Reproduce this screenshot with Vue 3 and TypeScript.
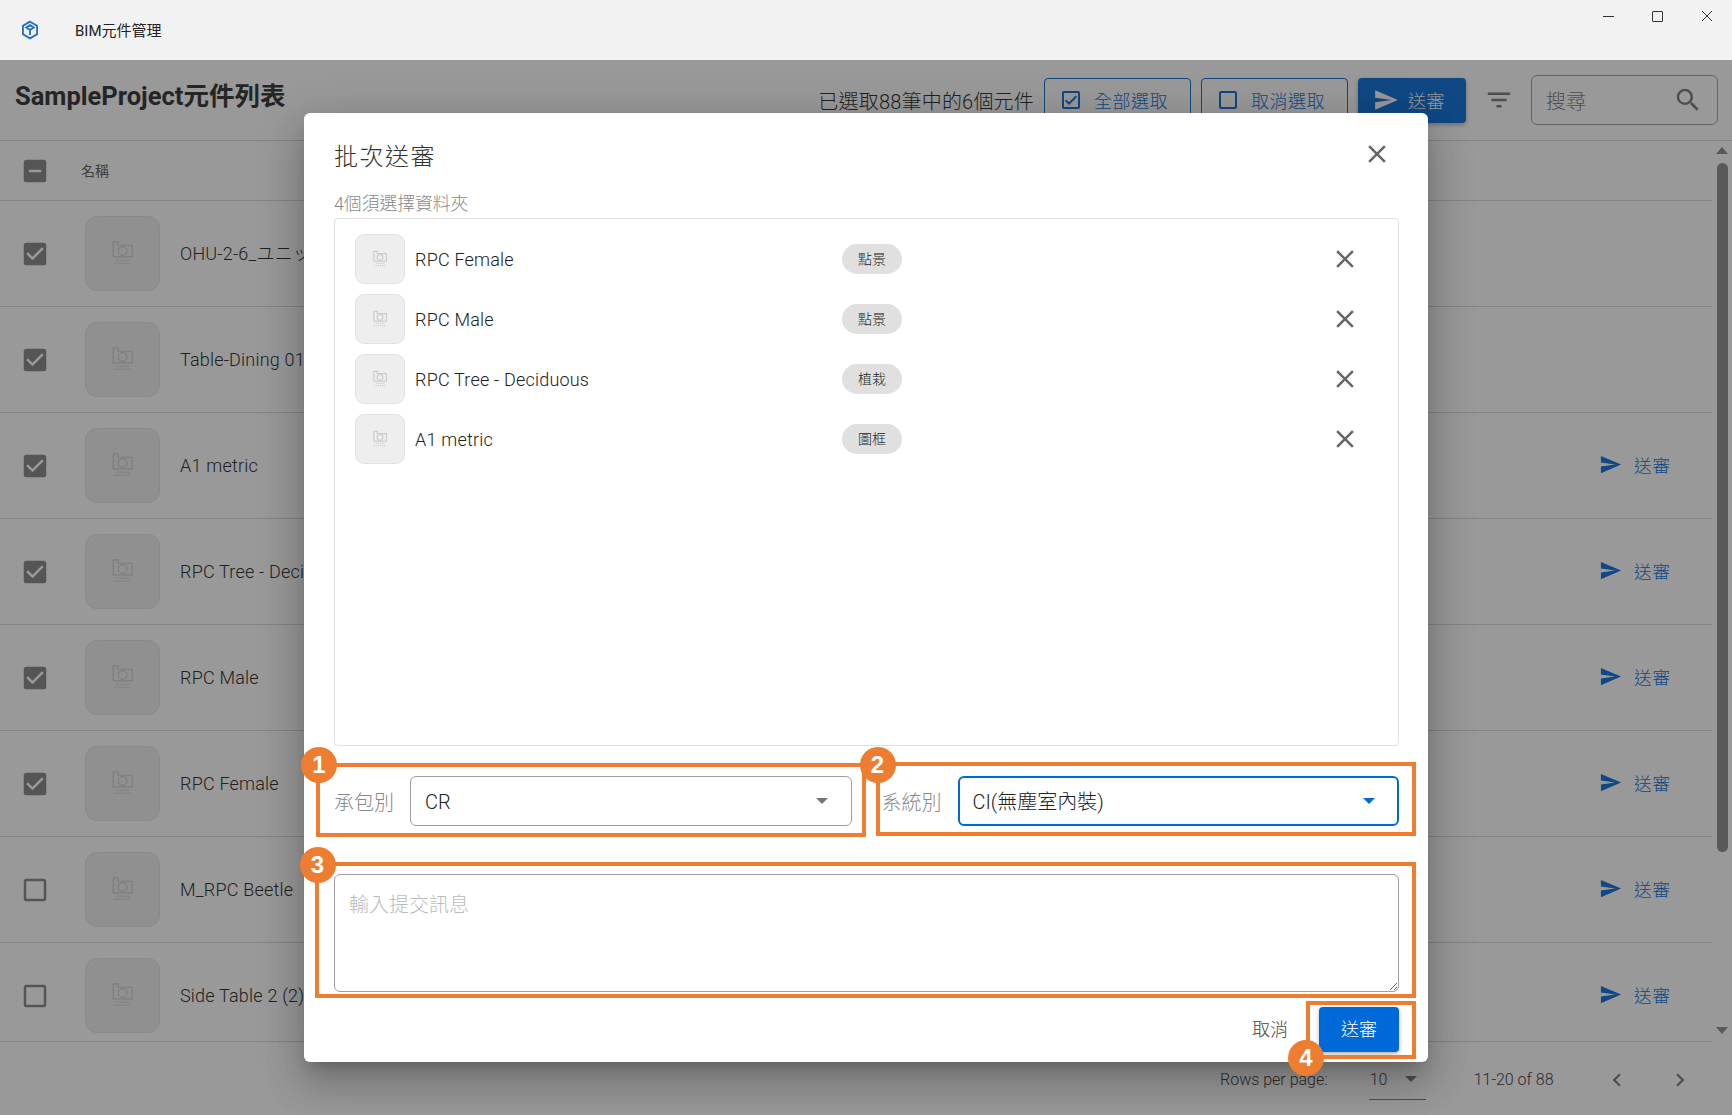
<template>
  <div class="app">
    <header class="titlebar">
      <svg class="logo" viewBox="0 0 24 24" fill="none" stroke="#1f6fc4" stroke-width="2.2">
        <path d="M12 2 L20.5 7 V17 L12 22 L3.500 17 V7 Z" />
        <path d="M7.500 9 L12 12 L16.500 9 L12 6.200 Z M12 12 V18" />
      </svg>
      <span class="app-name">BIM元件管理</span>
      <div class="win-controls">
        <span class="win-min"></span>
        <span class="win-max"></span>
        <svg class="win-close" viewBox="0 0 12 12" stroke="#333" stroke-width="1"><path d="M1 1 L11 11 M11 1 L1 11" /></svg>
      </div>
    </header>

    <main class="page">
      <div class="toolbar">
        <h1 class="page-title">SampleProject元件列表</h1>
        <div class="tools">
          <span class="select-count">已選取88筆中的6個元件</span>
          <button class="btn-outline">
            <svg viewBox="0 0 24 24"><path :d="icons.boxChecked" /></svg>全部選取
          </button>
          <button class="btn-outline">
            <svg viewBox="0 0 24 24"><path :d="icons.boxOutline" /></svg>取消選取
          </button>
          <button class="btn-solid">
            <svg viewBox="0 0 24 24"><path :d="icons.send" /></svg>送審
          </button>
          <svg class="filter-icon" viewBox="0 0 24 24"><path :d="icons.filter" /></svg>
          <div class="search">
            <span>搜尋</span>
            <svg viewBox="0 0 24 24"><path :d="icons.search" /></svg>
          </div>
        </div>
      </div>

      <div class="table-wrap">
        <div class="table">
          <div class="table-head">
            <svg class="check" viewBox="0 0 24 24"><path :d="icons.minusBox" /></svg>
            <span class="col-name">名稱</span>
          </div>
          <div class="table-rows">
            <div v-for="row in rows" :key="row.name" class="row">
              <svg class="check" viewBox="0 0 24 24"><path :d="row.checked ? icons.checked : icons.boxOutline" /></svg>
              <div class="thumb thumb-lg">
                <svg viewBox="0 0 75 75" fill="none" stroke="#ccc" stroke-width="1.2">
                  <path :d="cameraPath" />
                  <circle cx="37.5" cy="35" r="4.500" />
                  <path d="M31 44.500 H44 M28.500 47.500 H46.500" stroke-dasharray="1 1" stroke-width="1.500" />
                </svg>
              </div>
              <span class="row-name">{{ row.name }}</span>
              <div v-if="row.action" class="row-action">
                <svg viewBox="0 0 24 24"><path :d="icons.send" /></svg>送審
              </div>
            </div>
          </div>
        </div>
        <div class="scrollbar">
          <span class="arrow-up"></span>
          <span class="scroll-thumb"></span>
          <span class="scroll-rest"></span>
          <span class="arrow-down"></span>
        </div>
      </div>

      <div class="pager">
        <span>Rows per page:</span>
        <div class="per-page"><span>10</span><i class="caret"></i></div>
        <span class="range">11-20 of 88</span>
        <svg viewBox="0 0 24 24"><path :d="icons.chevronLeft" /></svg>
        <svg viewBox="0 0 24 24"><path :d="icons.chevronRight" /></svg>
      </div>

      <div class="scrim">
        <section class="dialog">
          <div class="dialog-head">
            <h2>批次送審</h2>
            <svg viewBox="0 0 24 24"><path :d="icons.close" /></svg>
          </div>
          <p class="list-label">4個須選擇資料夾</p>
          <ul class="item-list">
            <li v-for="item in items" :key="item.name">
              <div class="thumb">
                <svg viewBox="0 0 75 75" fill="none" stroke="#ccc" stroke-width="1.800">
                  <path :d="cameraPath" />
                  <circle cx="37.5" cy="35" r="4.500" />
                  <path d="M31 44.500 H44 M28.500 48 H46.500" stroke-dasharray="1.500 1.500" stroke-width="2" />
                </svg>
              </div>
              <span class="item-name">{{ item.name }}</span>
              <span class="chip">{{ item.tag }}</span>
              <svg class="item-remove" viewBox="0 0 24 24"><path :d="icons.close" /></svg>
            </li>
          </ul>

          <div class="fields">
            <div class="field">
              <label>承包別</label>
              <div class="select"><span>CR</span><i class="caret"></i></div>
            </div>
            <div class="field">
              <label>系統別</label>
              <div class="select focused"><span>CI(無塵室內裝)</span><i class="caret"></i></div>
            </div>
          </div>

          <textarea class="message" placeholder="輸入提交訊息"></textarea>

          <div class="actions">
            <button class="btn-text">取消</button>
            <button class="btn-primary">送審</button>
          </div>

          <div v-for="mark in marks" :key="mark" class="mark" :class="'mark-' + mark">
            <span class="badge">{{ mark }}</span>
          </div>
        </section>
      </div>
    </main>
  </div>
</template>

<script setup lang="ts">
interface Row {
  name: string
  checked: boolean
  action: boolean
}

const icons = {
  send: 'M2,21L23,12L2,3V10L17,12L2,14V21Z',
  filter: 'M6,13H18V11H6M3,6V8H21V6M10,18H14V16H10V18Z',
  search: 'M9.5,3A6.5,6.5 0 0,1 16,9.5C16,11.11 15.41,12.59 14.44,13.73L14.71,14H15.5L20.5,19L19,20.5L14,15.5V14.71L13.73,14.44C12.59,15.41 11.11,16 9.5,16A6.5,6.5 0 0,1 3,9.5A6.5,6.5 0 0,1 9.5,3M9.5,5C7,5 5,7 5,9.5C5,12 7,14 9.5,14C12,14 14,12 14,9.5C14,7 12,5 9.5,5Z',
  close: 'M19,6.41L17.59,5L12,10.59L6.41,5L5,6.41L10.59,12L5,17.59L6.41,19L12,13.41L17.59,19L19,17.59L13.41,12L19,6.41Z',
  checked: 'M10,17L5,12L6.41,10.58L10,14.17L17.59,6.58L19,8M19,3H5C3.89,3 3,3.89 3,5V19A2,2 0 0,0 5,21H19A2,2 0 0,0 21,19V5C21,3.89 20.1,3 19,3Z',
  boxOutline: 'M19,3H5C3.89,3 3,3.89 3,5V19A2,2 0 0,0 5,21H19A2,2 0 0,0 21,19V5C21,3.89 20.1,3 19,3M19,5V19H5V5H19Z',
  boxChecked: 'M19,3H5C3.89,3 3,3.89 3,5V19A2,2 0 0,0 5,21H19A2,2 0 0,0 21,19V5C21,3.89 20.1,3 19,3M19,5V19H5V5H19ZM10,17L6,13L7.41,11.59L10,14.17L16.59,7.58L18,9Z',
  minusBox: 'M17,13H7V11H17M19,3H5C3.89,3 3,3.89 3,5V19A2,2 0 0,0 5,21H19A2,2 0 0,0 21,19V5C21,3.89 20.1,3 19,3Z',
  chevronLeft: 'M15.41,16.58L10.83,12L15.41,7.41L14,6L8,12L14,18L15.41,16.58Z',
  chevronRight: 'M8.59,16.58L13.17,12L8.59,7.41L10,6L16,12L10,18L8.59,16.58Z'
}

const cameraPath = 'M28 29 V25.500 H33 V29 H47.500 V41 H28 Z'

const rows: Row[] = [
  { name: 'OHU-2-6_ユニットエアコン', checked: true, action: false },
  { name: 'Table-Dining 01', checked: true, action: false },
  { name: 'A1 metric', checked: true, action: true },
  { name: 'RPC Tree - Deciduous', checked: true, action: true },
  { name: 'RPC Male', checked: true, action: true },
  { name: 'RPC Female', checked: true, action: true },
  { name: 'M_RPC Beetle', checked: false, action: true },
  { name: 'Side Table 2 (2)', checked: false, action: true }
]

const items = [
  { name: 'RPC Female', tag: '點景' },
  { name: 'RPC Male', tag: '點景' },
  { name: 'RPC Tree - Deciduous', tag: '植栽' },
  { name: 'A1 metric', tag: '圖框' }
]

const marks = [1, 2, 3, 4]
</script>

<style>
html, body { margin: 0; background: #fff; overflow: hidden; }
</style>

<style scoped>
.app {
  height: 1115px;
  display: flex;
  flex-direction: column;
  font-family: Roboto, "Noto Sans CJK TC", sans-serif;
  font-weight: 300;
  color: #212121;
}
.titlebar {
  height: 60px;
  flex: none;
  display: flex;
  align-items: center;
  background: #f2f2f2;
}
.logo { width: 20px; height: 20px; margin-left: 20px; }
.app-name { margin: 0 0 2px 35px; font-size: 15px; font-weight: 400; color: #222; }
.win-controls {
  margin-left: auto;
  align-self: flex-start;
  height: 32px;
  display: flex;
  align-items: center;
  gap: 38px;
  padding-right: 19px;
}
.win-min { width: 11px; height: 1px; background: #333; }
.win-max { width: 11px; height: 11px; border: 1px solid #333; border-radius: 1px; box-sizing: border-box; }
.win-close { width: 12px; height: 12px; }

.page { flex: 1; min-height: 0; display: flex; flex-direction: column; position: relative; }
.toolbar {
  height: 81px;
  flex: none;
  box-sizing: border-box;
  display: flex;
  align-items: center;
  justify-content: space-between;
  padding: 0 14px 0 15px;
  border-bottom: 1px solid #d6d6d6;
}
.page-title { margin: 0 0 13px; font-size: 25.5px; font-weight: 700; color: #2a2a2a; }
.tools { display: flex; align-items: center; gap: 10px; }
.select-count { font-size: 20px; letter-spacing: 0.2px; }
.tools button {
  height: 45px;
  box-sizing: border-box;
  display: flex;
  align-items: center;
  font: inherit;
  font-size: 18px;
  letter-spacing: 0.5px;
  border-radius: 4px;
  cursor: pointer;
}
.tools button svg { fill: currentColor; }
.btn-outline {
  width: 147px;
  padding: 0 0 0 14px;
  gap: 11px;
  background: #fff;
  color: #0069d9;
  border: 1px solid #0069d9;
}
.btn-outline svg { width: 24px; height: 24px; }
.btn-solid {
  width: 108px;
  padding: 0 0 0 15px;
  gap: 9px;
  background: #0069d9;
  color: #fff;
  border: none;
  box-shadow: 0 2px 4px rgba(0,0,0,0.3);
}
.btn-solid svg { width: 26px; height: 26px; }
.filter-icon { width: 30px; height: 30px; fill: #757575; margin: 0 7px 0 8px; }
.search {
  width: 187px;
  height: 50px;
  box-sizing: border-box;
  display: flex;
  align-items: center;
  justify-content: space-between;
  padding: 0 14px;
  border: 1px solid #9e9e9e;
  border-radius: 6px;
  font-size: 20px;
  color: #777;
}
.search svg { width: 30px; height: 30px; fill: #757575; }

.table-wrap { flex: 1; min-height: 0; display: flex; }
.table { flex: 1; min-width: 0; display: flex; flex-direction: column; }
.table-head {
  height: 60px;
  flex: none;
  box-sizing: border-box;
  display: flex;
  align-items: center;
  padding-left: 20px;
  border-bottom: 1px solid #d6d6d6;
}
.check { width: 30px; height: 30px; fill: #828282; flex: none; }
.col-name { margin: 0 0 2px 31px; font-size: 14px; font-weight: 400; color: #555; }
.table-rows { flex: 1; min-height: 0; overflow: hidden; border-bottom: 1px solid #d6d6d6; }
.row {
  height: 106px;
  box-sizing: border-box;
  display: flex;
  align-items: center;
  padding-left: 20px;
  border-bottom: 1px solid #d6d6d6;
}
.thumb {
  width: 50px;
  height: 50px;
  flex: none;
  box-sizing: border-box;
  background: #eee;
  border: 1px solid #e4e4e4;
  border-radius: 9px;
}
.thumb svg { display: block; width: 100%; height: 100%; }
.thumb-lg { width: 75px; height: 75px; margin-left: 35px; border-radius: 12px; }
.row-name { margin-left: 20px; font-size: 18px; line-height: 24px; letter-spacing: 0.2px; white-space: nowrap; }
.row-action {
  margin: 0 41px 2px auto;
  display: flex;
  align-items: center;
  gap: 12px;
  font-size: 17.5px;
  letter-spacing: 1px;
  color: #0069d9;
}
.row-action svg { width: 23px; height: 23px; fill: currentColor; }
.scrollbar {
  width: 20px;
  flex: none;
  display: flex;
  flex-direction: column;
  align-items: center;
  padding-top: 6px;
  padding-bottom: 8px;
  box-sizing: border-box;
}
.arrow-up { width: 0; height: 0; border: 6px solid transparent; border-top: 0; border-bottom: 7px solid #898989; }
.arrow-down { width: 0; height: 0; border: 6px solid transparent; border-bottom: 0; border-top: 7px solid #898989; }
.scroll-thumb { width: 11px; height: 689px; margin-top: 9px; flex: none; background: #898989; border-radius: 6px; }
.scroll-rest { flex: 1; }

.pager {
  height: 73px;
  flex: none;
  box-sizing: border-box;
  display: flex;
  align-items: center;
  font-size: 16px;
  color: #333;
  padding: 2px 0 0 1220px;
}
.per-page {
  width: 57px;
  height: 40px;
  margin-left: 41px;
  box-sizing: border-box;
  display: flex;
  align-items: center;
  justify-content: space-between;
  padding: 0 9px 0 1px;
  border-bottom: 1px solid #757575;
}
.caret {
  width: 0;
  height: 0;
  border-left: 6px solid transparent;
  border-right: 6px solid transparent;
  border-top: 6px solid #757575;
}
.range { margin: 0 50px 0 48px; }
.pager svg { width: 26px; height: 26px; fill: #757575; margin-right: 37px; }

.scrim {
  position: absolute;
  inset: 0;
  display: flex;
  align-items: center;
  justify-content: center;
  background: rgba(33,33,33,0.46);
}
.dialog {
  position: relative;
  width: 1124px;
  height: 949px;
  box-sizing: border-box;
  display: flex;
  flex-direction: column;
  padding: 24px 29px 0 30px;
  background: #fff;
  border-radius: 6px;
  box-shadow: 0 11px 15px -7px rgba(0,0,0,0.2), 0 24px 38px 3px rgba(0,0,0,0.14), 0 9px 46px 8px rgba(0,0,0,0.12);
}
.dialog-head {
  height: 34px;
  display: flex;
  align-items: center;
  justify-content: space-between;
  padding-right: 7px;
}
.dialog-head h2 { margin: 0; font-size: 24px; font-weight: 300; letter-spacing: 1.5px; color: #333; }
.dialog-head svg { width: 30px; height: 30px; fill: #666; }
.list-label { margin: 21px 0 2px; line-height: 24px; font-size: 17.800px; color: #888; }
.item-list {
  height: 528px;
  flex: none;
  box-sizing: border-box;
  list-style: none;
  margin: 0;
  padding: 15px 0 0 20px;
  border: 1px solid #e0e0e0;
  border-radius: 4px;
}
.item-list li { height: 50px; margin-bottom: 10px; display: flex; align-items: center; }
.item-name { width: 427px; margin-left: 10px; font-size: 18px; letter-spacing: 0.2px; }
.chip {
  width: 60px;
  height: 30px;
  line-height: 30px;
  text-align: center;
  background: #e0e0e0;
  border-radius: 15px;
  font-size: 14px;
}
.item-remove { width: 30px; height: 30px; fill: #666; margin-left: 428px; }

.fields { display: grid; grid-template-columns: 1fr 1fr; gap: 30px; margin-top: 30px; }
.field { display: flex; align-items: center; }
.field label { width: 76px; flex: none; font-size: 20px; color: #888; }
.select {
  flex: 1;
  height: 50px;
  box-sizing: border-box;
  display: flex;
  align-items: center;
  justify-content: space-between;
  padding: 0 23px 0 14px;
  border: 1px solid #9e9e9e;
  border-radius: 6px;
  font-size: 20px;
}
.select span { line-height: 30px; padding-top: 2px; }
.select.focused { border: 2px solid #0069d9; padding: 0 22px 0 13px; }
.select.focused .caret { border-top-color: #0069d9; }
.message {
  display: block;
  height: 118px;
  flex: none;
  box-sizing: border-box;
  margin-top: 48px;
  padding: 14px;
  border: 1px solid #9e9e9e;
  border-radius: 6px;
  font: inherit;
  font-size: 20px;
  outline: none;
}
.message::placeholder { color: #bbb; }
.actions { display: flex; justify-content: flex-end; align-items: center; gap: 31px; margin-top: 15px; }
.actions button { font: inherit; font-size: 18px; border: none; cursor: pointer; }
.btn-text { background: none; padding: 0 0 3px; color: #444; }
.btn-primary {
  width: 80px;
  height: 45px;
  padding: 0 0 3px;
  background: #0069d9;
  color: #fff;
  border-radius: 4px;
  box-shadow: 0 2px 4px rgba(0,0,0,0.3);
}

/* orange call-outs drawn over the form */
.mark { position: absolute; box-sizing: border-box; border: 4px solid #ed7d31; }
.mark-1 { left: 12px; top: 650px; width: 550px; height: 74px; }
.mark-2 { left: 572px; top: 649px; width: 540px; height: 74px; }
.mark-3 { left: 11px; top: 749px; width: 1101px; height: 136px; }
.mark-4 { left: 1002px; top: 888px; width: 110px; height: 58px; }
.badge {
  position: absolute;
  width: 36px;
  height: 36px;
  border-radius: 50%;
  background: #ed7d31;
  color: #fff;
  font: 700 24px/36px "Liberation Sans", sans-serif;
  text-align: center;
}
.mark-1 .badge { left: -19px; top: -20px; }
.mark-2 .badge { left: -20.5px; top: -19px; }
.mark-3 .badge { left: -19.5px; top: -19px; }
.mark-4 .badge { left: -22px; top: 35px; }
</style>
